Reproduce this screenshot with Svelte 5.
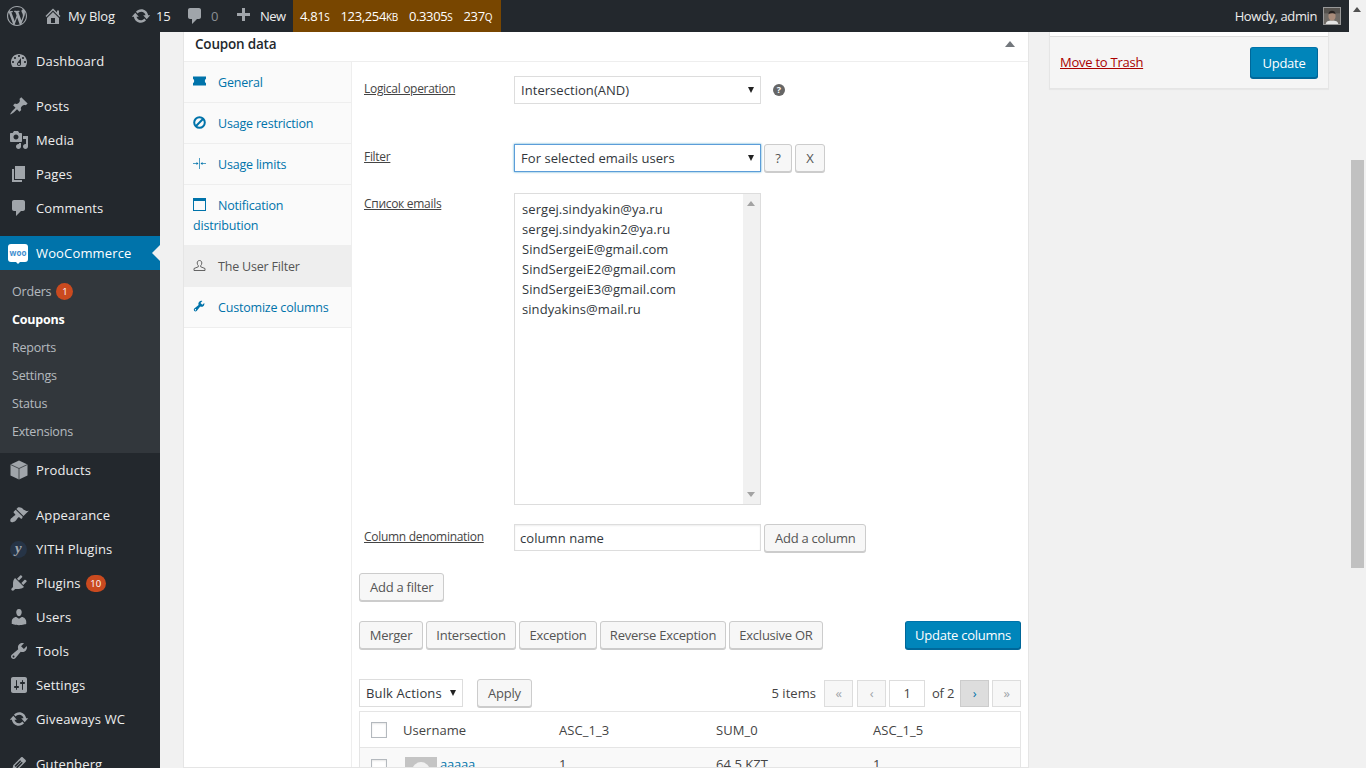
<script>
  const icons = {
    dashboard: "M3.76 16h12.48c1.1-1.37 1.76-3.11 1.76-5 0-4.42-3.58-8-8-8s-8 3.58-8 8c0 1.89.66 3.63 1.76 5zM10 4c.55 0 1 .45 1 1s-.45 1-1 1-1-.45-1-1 .45-1 1-1zM6 6c.55 0 1 .45 1 1s-.45 1-1 1-1-.45-1-1 .45-1 1-1zm8 0c.55 0 1 .45 1 1s-.45 1-1 1-1-.45-1-1 .45-1 1-1zm-5.37 5.55L12 7v6c0 1.1-.9 2-2 2s-2-.9-2-2c0-.57.24-1.08.63-1.45zM4 10c.55 0 1 .45 1 1s-.45 1-1 1-1-.45-1-1 .45-1 1-1zm12 0c.55 0 1 .45 1 1s-.45 1-1 1-1-.45-1-1 .45-1 1-1zm-5 3c0-.55-.45-1-1-1s-1 .45-1 1 .45 1 1 1 1-.45 1-1z",
    pin: "M10.44 3.02l1.82-1.82 6.36 6.35-1.83 1.82c-1.05-.68-2.48-.57-3.41.36l-.75.75c-.92.93-1.04 2.35-.35 3.41l-1.83 1.82-2.41-2.41-2.8 2.79c-.42.42-3.38 2.71-3.8 2.29s1.86-3.39 2.28-3.81l2.79-2.79L4.1 9.36l1.83-1.82c1.05.69 2.48.57 3.4-.36l.75-.75c.93-.92 1.05-2.35.36-3.41z",
    media: "M13 11V4c0-.55-.45-1-1-1h-1.67L9 1H5L3.67 3H2c-.55 0-1 .45-1 1v7c0 .55.45 1 1 1h10c.55 0 1-.45 1-1zM7 4.5c1.38 0 2.5 1.12 2.5 2.5S8.38 9.5 7 9.5 4.5 8.38 4.5 7 5.62 4.5 7 4.5zM14 6h5v10.5c0 1.38-1.12 2.5-2.5 2.5S14 17.88 14 16.5s1.12-2.5 2.5-2.5c.17 0 .34.02.5.05V9h-3V6zm-4 8.05V13h2v3.5c0 1.38-1.12 2.5-2.5 2.5S7 17.88 7 16.5 8.12 14 9.5 14c.17 0 .34.02.5.05z",
    page: "M6 15V2h10v13H6zm-1 1h8v2H3V5h2v11z",
    comment: "M5 2h9c1.1 0 2 .9 2 2v7c0 1.1-.9 2-2 2h-2l-5 5v-5H5c-1.1 0-2-.9-2-2V4c0-1.1.9-2 2-2z",
    brush: "M14.48 11.06L7.41 3.99l1.5-1.5c.5-.56 2.3-.47 3.51.32 1.21.8 1.43 1.28 2.91 2.1 1.18.64 2.45 1.26 4.45.85zm-.71.71L6.7 4.7 4.93 6.47c-.39.39-.39 1.02 0 1.41l1.06 1.06c.39.39.39 1.03 0 1.42-.6.6-1.43 1.11-2.21 1.69-.35.26-.7.53-1.01.84C1.43 13.23.79 16 1.65 16.85c.86.86 3.63.22 4.98-1.12.31-.31.58-.66.84-1.01.58-.78 1.09-1.61 1.69-2.21.39-.39 1.03-.39 1.42 0l1.06 1.06c.39.39 1.02.39 1.41 0z",
    plug: "M13.11 4.36L9.87 7.6 8 5.73l3.24-3.24c.35-.34 1.05-.2 1.56.32.52.51.66 1.21.31 1.55zm-8 1.77l.91-1.12 9.01 9.01-1.19.84c-.71.71-2.63 1.16-3.82 1.16H6.14L4.9 17.26c-.59.59-1.54.59-2.12 0-.59-.58-.59-1.53 0-2.12l1.24-1.24v-3.88c0-1.13.4-3.19 1.09-3.89zm7.26 3.97l3.24-3.24c.34-.35 1.04-.21 1.55.31.52.51.66 1.21.31 1.55l-3.24 3.25z",
    users: "M10 9.25c-2.27 0-2.73-3.44-2.73-3.44C7 4.02 7.82 2 9.97 2c2.16 0 2.98 2.02 2.71 3.81 0 0-.41 3.44-2.68 3.44zm0 2.57L12.72 10c2.39 0 4.52 2.33 4.52 4.53v2.49s-3.65 1.13-7.24 1.13c-3.65 0-7.24-1.13-7.24-1.13v-2.49c0-2.25 1.94-4.48 4.47-4.48z",
    tools: "M16.68 9.77c-1.34 1.34-3.3 1.67-4.95.99l-5.41 6.52c-.99.99-2.59.99-3.58 0s-.99-2.59 0-3.57l6.52-5.42c-.68-1.65-.35-3.61.99-4.95 1.28-1.28 3.12-1.62 4.72-1.06l-2.89 2.89 2.82 2.82 2.86-2.87c.53 1.58.18 3.39-1.08 4.65zM3.81 16.21c.4.39 1.04.39 1.43 0 .4-.4.4-1.04 0-1.43-.39-.4-1.03-.4-1.43 0-.39.39-.39 1.03 0 1.43z",
    sliders: "M18 16V4c0-1.1-.9-2-2-2H4c-1.1 0-2 .9-2 2v12c0 1.1.9 2 2 2h12c1.1 0 2-.9 2-2zM8 11h1c.55 0 1 .45 1 1s-.45 1-1 1H8v1.5c0 .28-.22.5-.5.5s-.5-.22-.5-.5V13H6c-.55 0-1-.45-1-1s.45-1 1-1h1V5.5c0-.28.22-.5.5-.5s.5.22.5.5V11zm5-2h-1c-.55 0-1-.45-1-1s.45-1 1-1h1V5.5c0-.28.22-.5.5-.5s.5.22.5.5V7h1c.55 0 1 .45 1 1s-.45 1-1 1h-1v5.5c0 .28-.22.5-.5.5s-.5-.22-.5-.5V9z",
    update: "M10.2 3.28c3.53 0 6.43 2.61 6.92 6h2.08l-3.5 4-3.5-4h2.32c-.45-1.97-2.21-3.45-4.32-3.45-1.45 0-2.73.71-3.54 1.78L4.95 5.66C6.23 4.2 8.11 3.28 10.2 3.28zm-.4 13.44c-3.52 0-6.43-2.61-6.92-6H.8l3.5-4c1.17 1.33 2.33 2.67 3.5 4H5.48c.45 1.97 2.21 3.45 4.32 3.45 1.45 0 2.73-.71 3.54-1.78l1.71 1.95c-1.28 1.46-3.15 2.38-5.25 2.38z",
    home: "M16 8.5l1.53 1.53-1.06 1.06L10 4.62l-6.47 6.47-1.06-1.06L10 2.5l4 4v-2h2v4zm-6-2.46l6 5.99V18H4v-5.97zM12 17v-5H8v5h4z",
    plus: "M17 7v3h-5v5H9v-5H4V7h5V2h3v5h5z",
    wp: "M20 10c0-5.51-4.49-10-10-10C4.48 0 0 4.49 0 10c0 5.52 4.48 10 10 10 5.51 0 10-4.48 10-10zM7.78 15.37L4.37 6.22c.55-.02 1.17-.08 1.17-.08.5-.06.44-1.13-.06-1.11 0 0-1.45.11-2.37.11-.18 0-.37 0-.58-.01C4.12 2.69 6.87 1.11 10 1.11c2.33 0 4.45.87 6.05 2.34-.68-.11-1.65.39-1.65 1.58 0 .74.45 1.36.9 2.1.35.61.55 1.36.55 2.46 0 1.49-1.4 5-1.4 5l-3.03-8.37c.54-.02.82-.17.82-.17.5-.05.44-1.25-.06-1.22 0 0-1.44.12-2.38.12-.87 0-2.33-.12-2.33-.12-.5-.03-.56 1.2-.06 1.22l.92.08 1.26 3.41zM17.41 10c.24-.64.74-1.87.43-4.25.7 1.29 1.05 2.71 1.05 4.25 0 3.29-1.73 6.24-4.4 7.78.97-2.59 1.94-5.2 2.92-7.78zM6.1 18.09C3.12 16.65 1.11 13.53 1.11 10c0-1.3.23-2.48.72-3.59C3.25 10.3 4.67 14.2 6.1 18.09zm4.03-6.63l2.58 6.98c-.86.29-1.76.45-2.71.45-.79 0-1.57-.11-2.29-.33.81-2.38 1.62-4.74 2.42-7.1z",
    pencil: "M13.89 3.39l2.71 2.72c.46.46.42 1.24.03 1.64l-8.01 8.02-5.56 1.16 1.16-5.58s7.6-7.63 7.99-8.03c.39-.39 1.22-.39 1.68.07zm-2.73 2.79l-5.59 5.61 1.11 1.11 5.54-5.65zm-2.97 8.23l5.58-5.6-1.07-1.08-5.59 5.6z"
  };
  const top1 = [{ i: 'pin', t: 'Posts' }, { i: 'media', t: 'Media' }, { i: 'page', t: 'Pages' }, { i: 'comment', t: 'Comments' }];
  const subs = ['Coupons', 'Reports', 'Settings', 'Status', 'Extensions'];
  const top2 = [{ i: 'plug', t: 'Plugins', b: '10' }, { i: 'users', t: 'Users' }, { i: 'tools', t: 'Tools' }, { i: 'sliders', t: 'Settings' }, { i: 'update', t: 'Giveaways WC' }];
  const emails = ['sergej.sindyakin@ya.ru', 'sergej.sindyakin2@ya.ru', 'SindSergeiE@gmail.com', 'SindSergeiE2@gmail.com', 'SindSergeiE3@gmail.com', 'sindyakins@mail.ru'];
  const ops = ['Merger', 'Intersection', 'Exception', 'Reverse Exception', 'Exclusive OR'];
</script>

{#snippet icon(name, cls = '')}
  <svg class="ic {cls}" viewBox="0 0 20 20" aria-hidden="true"><path d={icons[name]} fill-rule="evenodd" /></svg>
{/snippet}

<div class="screen">
  <div class="left">
    <header class="adminbar">
      <div class="ab-group">
        <span class="ab-item wp">{@render icon('wp')}</span>
        <span class="ab-item home">{@render icon('home')}<span>My Blog</span></span>
        <span class="ab-item upd">{@render icon('update')}<span>15</span></span>
        <span class="ab-item cmt">{@render icon('comment')}<span class="dim">0</span></span>
        <span class="ab-item new">{@render icon('plus')}<span>New</span></span>
        <span class="qm"><span>4.81<small>S</small></span><span>123,254<small>KB</small></span><span>0.3305<small>S</small></span><span>237<small>Q</small></span></span>
      </div>
      <div class="howdy">
        <span>Howdy, admin</span>
        <svg class="avatar" viewBox="0 0 18 18" aria-hidden="true">
          <rect width="18" height="18" fill="#6f6b66" />
          <rect x="0" y="0" width="18" height="6" fill="#55524e" />
          <path d="M2 18c0-3 3-4 7-4s7 1 7 4z" fill="#e4e4e4" />
          <ellipse cx="9" cy="9" rx="4" ry="5" fill="#a98c7a" />
          <path d="M5 7c0-3 2-4 4-4s4 1 4 4c-2-1.500-6-1.500-8 0z" fill="#262220" />
        </svg>
      </div>
    </header>

    <div class="body">
      <nav class="menu">
        <a class="mi">{@render icon('dashboard')}<span>Dashboard</span></a>
        <div class="sep"></div>
        {#each top1 as m}
          <a class="mi">{@render icon(m.i)}<span>{m.t}</span></a>
        {/each}
        <div class="sep"></div>
        <a class="mi current">
          <span class="woo"><span>woo</span></span><span>WooCommerce</span>
        </a>
        <div class="sub">
          <a class="si">Orders <b class="badge one">1</b></a>
          {#each subs as s, idx}
            <a class="si" class:on={idx === 0}>{s}</a>
          {/each}
        </div>
        <a class="mi">
          <svg class="ic" viewBox="0 0 20 20" aria-hidden="true"><path d="M10 0.500l8.500 4v11l-8.500 4-8.500-4v-11z" /><path d="M1.500 4.500l8.500 4 8.500-4M10 8.500v11" fill="none" stroke="#23282d" stroke-width=".7" /></svg>
          <span>Products</span>
        </a>
        <div class="sep"></div>
        <a class="mi">{@render icon('brush')}<span>Appearance</span></a>
        <a class="mi"><span class="yith">y</span><span>YITH Plugins</span></a>
        {#each top2 as m}
          <a class="mi">{@render icon(m.i)}<span>{m.t}</span>{#if m.b}<b class="badge">{m.b}</b>{/if}</a>
        {/each}
        <div class="sep"></div>
        <a class="mi">{@render icon('pencil')}<span>Gutenberg</span></a>
      </nav>

      <main class="content">
        <section class="card">
          <div class="card-h"><h2>Coupon data</h2><span class="up"></span></div>
          <div class="card-b">
            <ul class="tabs">
              <li>
                <svg class="ti" viewBox="0 0 14 14" aria-hidden="true"><path d="M0 1.500h13v2.200a2.800 2.800 0 0 0 0 4.600v2.200H0V8.300a2.800 2.800 0 0 0 0-4.600z" /></svg>
                General
              </li>
              <li>
                <svg class="ti" viewBox="0 0 14 14" aria-hidden="true"><circle cx="6.500" cy="6.500" r="5.300" fill="none" stroke="currentColor" stroke-width="2" /><path d="M2.800 10.200l7.400-7.400" stroke="currentColor" stroke-width="2" /></svg>
                Usage restriction
              </li>
              <li>
                <svg class="ti" viewBox="0 0 14 14" aria-hidden="true"><path d="M6.500 1v11M0 6.500h4M9 6.500h4" fill="none" stroke="currentColor" stroke-width=".7" /><path d="M5.500 6.500l-2-1.500v3zM7.500 6.500l2-1.500v3z" /></svg>
                Usage limits
              </li>
              <li>
                <svg class="ti" viewBox="0 0 14 14" aria-hidden="true"><rect x=".5" y=".5" width="12" height="12" fill="none" stroke="currentColor" /><rect x="0" y="0" width="13" height="3" /></svg>
                Notification distribution
              </li>
              <li class="active">
                <svg class="ti" viewBox="0 0 14 14" aria-hidden="true"><path d="M6.500 1.500c1.500 0 2.300 1.100 2.300 2.500 0 1.100-.5 2.100-1.100 2.600v1.200l4.300 1.700v2H1v-2l4.300-1.700V6.600C4.700 6.100 4.200 5.100 4.200 4c0-1.400.8-2.500 2.300-2.500z" fill="none" stroke="currentColor" stroke-width=".9" /></svg>
                The User Filter
              </li>
              <li>
                <svg class="ti" viewBox="0 0 14 14" aria-hidden="true"><path d={icons.tools} transform="translate(-.5 -.5) scale(.66)" /></svg>
                Customize columns
              </li>
            </ul>

            <div class="panel">
              <div class="frow r1">
                <span class="lab">Logical operation</span>
                <span class="sel"><select><option>Intersection(AND)</option></select></span>
                <span class="help">?</span>
              </div>
              <div class="frow r2">
                <span class="lab">Filter</span>
                <span class="sel focus"><select><option>For selected emails users</option></select></span>
                <button class="btn q">?</button>
                <button class="btn x">X</button>
              </div>
              <div class="frow r3">
                <span class="lab">Список emails</span>
                <div class="area">
                  <div class="lines">
                    {#each emails as e}<div>{e}</div>{/each}
                  </div>
                  <div class="sb"><i class="au"></i><i class="ad"></i></div>
                </div>
              </div>
              <div class="frow r4">
                <span class="lab">Column denomination</span>
                <span class="field">column name</span>
                <button class="btn">Add a column</button>
              </div>
              <div class="addf"><button class="btn">Add a filter</button></div>
              <div class="ops">
                {#each ops as o}<button class="btn">{o}</button>{/each}
                <button class="btn primary right">Update columns</button>
              </div>
              <div class="nav">
                <span class="sel bulk"><select><option>Bulk Actions</option></select></span>
                <button class="btn apply">Apply</button>
                <div class="pages">
                  <span class="count">5 items</span>
                  <span class="pg">«</span>
                  <span class="pg">‹</span>
                  <span class="cur">1</span>
                  <span class="of">of 2</span>
                  <span class="pg act">›</span>
                  <span class="pg">»</span>
                </div>
              </div>
              <div class="tbl">
                <div class="tr th">
                  <span class="c0"><i class="cb"></i></span>
                  <span class="c1">Username</span>
                  <span class="c2">ASC_1_3</span>
                  <span class="c3">SUM_0</span>
                  <span class="c4">ASC_1_5</span>
                </div>
                <div class="tr td">
                  <span class="c0"><i class="cb"></i></span>
                  <span class="c1"><span class="av"><i></i></span><a>aaaaa</a></span>
                  <span class="c2">1</span>
                  <span class="c3">64.5 KZT</span>
                  <span class="c4">1</span>
                </div>
              </div>
            </div>
          </div>
        </section>

        <aside class="side">
          <div class="side-top"></div>
          <div class="side-act">
            <a class="trash">Move to Trash</a>
            <button class="btn primary upd-b">Update</button>
          </div>
        </aside>
      </main>
    </div>
  </div>

  <div class="scroll">
    <i class="s-up"></i>
    <i class="thumb"></i>
  </div>
</div>

<style>
  :global(body) { margin: 0; background: #f1f1f1; }
  * { box-sizing: border-box; }
  .screen {
    width: 1366px; height: 768px; overflow: hidden; display: flex;
    font-family: "Open Sans", sans-serif; font-size: 13px; color: #444; letter-spacing: -0.2px;
  }
  .left { width: 1349px; display: flex; flex-direction: column; }
  .ic { width: 20px; height: 20px; fill: currentColor; display: block; flex: none; }

  .adminbar { height: 32px; background: #23282d; color: #eee; display: flex; justify-content: space-between; flex: none; }
  .ab-group { display: flex; align-items: stretch; }
  .ab-item { display: flex; align-items: center; gap: 5px; color: #eee; }
  .ab-item .ic { color: #a0a5aa; }
  .wp { padding-left: 7px; width: 43px; }
  .home { width: 88px; gap: 5px; }
  .upd { width: 54px; gap: 5px; }
  .cmt { width: 48px; gap: 6px; }
  .dim { color: #8a8f94; }
  .new { width: 60px; gap: 7px; letter-spacing: -.6px; }
  .qm { background: #784600; color: #fff; display: flex; align-items: center; gap: 11px; padding: 0 8px 0 7px; width: 208px; letter-spacing: -.35px; }
  .qm small { font-size: 10px; }
  .howdy { display: flex; align-items: center; gap: 6px; padding-right: 8px; letter-spacing: -.4px; }
  .avatar { width: 18px; height: 18px; border: 1px solid #999; }

  .body { flex: 1; display: flex; min-height: 0; }
  .menu { width: 160px; background: #23282d; flex: none; padding-top: 12px; display: flex; flex-direction: column; }
  .mi { height: 34px; flex: none; display: flex; align-items: center; gap: 7px; padding-left: 9px; color: #eee; position: relative; letter-spacing: .15px; }
  .mi .ic { color: #a0a5aa; }
  .sep { height: 11px; flex: none; }
  .current { background: #0073aa; color: #fff; }
  .current::after {
    content: ""; position: absolute; right: 0; top: 9px;
    border: 8px solid transparent; border-right-color: #f1f1f1; border-left-width: 0;
  }
  .woo { width: 20px; height: 18px; background: #fff; border-radius: 3px; display: flex; align-items: center; justify-content: center; margin: -1px 1px 0 -1px; position: relative; }
  .woo::after { content: ""; position: absolute; left: 8px; bottom: -2px; border: 2px solid transparent; border-top-color: #fff; border-bottom: 0; }
  .woo span { font-size: 8px; font-weight: 700; color: #3f8fd0; letter-spacing: 0; line-height: 1; }
  .yith { width: 17px; height: 17px; margin: 0 2px 0 1px; border-radius: 50%; background: #263446; color: #a0a5aa; font: italic 700 15px/15px "Liberation Serif", serif; text-align: center; flex: none; }
  .sub { background: #32373c; padding: 7px 0 8px; height: 183px; flex: none; font-size: 12.500px; }
  .si { display: flex; align-items: center; gap: 5px; height: 28px; padding-left: 12px; color: rgba(240,245,250,.7); }
  .si.on { color: #fff; font-weight: 700; }
  .badge { background: #ca4a1f; color: #fff; font-weight: 400; font-size: 9.500px; border-radius: 9px; min-width: 17px; height: 17px; padding: 0 5px; display: inline-flex; align-items: center; justify-content: center; letter-spacing: 0; }
  .mi .badge { margin-left: -2px; padding: 0 4px; min-width: 20px; }

  .content { flex: 1; display: flex; align-items: flex-start; padding-left: 23px; gap: 20px; min-width: 0; height: 736px; overflow: hidden; }
  .card { width: 846px; height: 736px; flex: none; background: #fff; border: 1px solid #e5e5e5; border-top: 0; overflow: hidden; }
  .card-h { height: 30px; display: flex; align-items: center; justify-content: space-between; padding: 0 13px 6px 11px; border-bottom: 1px solid #eee; }
  h2 { margin: 0; font-size: 13.500px; font-weight: 600; color: #23282d; }
  .up { border: 5px solid transparent; border-bottom: 6px solid #72777c; border-top: 0; }
  .card-b { display: flex; }
  .tabs { list-style: none; margin: 0; padding: 0; width: 168px; flex: none; background: #fff; border-right: 1px solid #eee; height: 706px; font-size: 12.500px; }
  .tabs li { color: #0073aa; padding: 11px 9px 9px; line-height: 20px; border-bottom: 1px solid #eee; background: #fafafa; }
  .tabs li.active { background: #eee; color: #555; }
  .ti { width: 14px; height: 14px; fill: currentColor; vertical-align: -2px; margin-right: 8px; display: inline-block; }

  .panel { flex: 1; min-width: 0; padding: 14px 7px 0 7px; }
  .frow { display: flex; align-items: flex-start; position: relative; padding-left: 5px; }
  .lab { width: 150px; flex: none; font-size: 12px; text-decoration: underline; color: #444; line-height: 16px; margin-top: 5px; letter-spacing: -.3px; }
  .r1 { height: 68px; }
  .r1 select { letter-spacing: .2px; }
  .r2 { height: 49px; }
  .r3 { height: 331px; }
  .r3 .lab { margin-top: 3px; }
  .r4 { height: 49px; }
  .lab + * { margin-right: 3px; }
  .sel { position: relative; display: block; width: 247px; height: 28px; }
  .sel select {
    appearance: none; width: 100%; height: 100%; border: 1px solid #ddd; background: #fff; padding: 0 6px;
    font: inherit; font-size: 13px; color: #32373c; border-radius: 0; letter-spacing: .05px; display: block;
  }
  .sel::after { content: ""; position: absolute; right: 7px; top: 11px; border: 3px solid transparent; border-top: 6px solid #222; border-bottom: 0; pointer-events: none; }
  .focus select { border-color: #5b9dd9; box-shadow: 0 0 2px rgba(30,140,190,.8); }
  .help { width: 12px; height: 12px; margin: 8px 0 0 9px; border-radius: 50%; background: #666; color: #fff; font-size: 9px; font-weight: 700; line-height: 12px; text-align: center; letter-spacing: 0; }

  .btn {
    font: inherit; letter-spacing: -.25px; height: 28px; padding: 0 10px; background: #f7f7f7; border: 1px solid #ccc; border-radius: 3px;
    box-shadow: 0 1px 0 #ccc; color: #555; font-size: 13px; line-height: 26px; white-space: nowrap;
  }
  .btn.q { width: 28px; padding: 0; margin-right: 3px; }
  .btn.x { width: 30px; padding: 0; }
  .primary { background: #0085ba; border-color: #0073aa #006799 #006799; box-shadow: 0 1px 0 #006799; color: #fff; }

  .area { width: 247px; height: 312px; border: 1px solid #ddd; display: flex; }
  .lines { flex: 1; padding: 5px 7px; line-height: 20px; color: #32373c; letter-spacing: .07px; }
  .sb { width: 17px; background: #f1f1f1; position: relative; }
  .au, .ad { position: absolute; left: 4px; border: 4px solid transparent; }
  .au { top: 7px; border-bottom: 5px solid #a3a3a3; border-top: 0; }
  .ad { bottom: 7px; border-top: 5px solid #a3a3a3; border-bottom: 0; }
  .field { width: 247px; height: 27px; border: 1px solid #ddd; padding: 0 5px; line-height: 26px; color: #32373c; box-shadow: inset 0 1px 2px rgba(0,0,0,.07); letter-spacing: .07px; }

  .addf { height: 48px; }
  .ops { display: grid; grid-template-columns: 64px 90px 78px 126px 94px 1fr 116px; column-gap: 3px; height: 58px; align-items: start; }
  .ops .btn { padding: 0; }
  .ops .right { grid-column: 7; }
  .nav { display: flex; align-items: flex-start; height: 32px; }
  .bulk { width: 104px; height: 28px; }
  .bulk select { letter-spacing: .13px; }
  .bulk::after { top: 11px; }
  .apply { margin-left: 14px; }
  .pages { margin-left: auto; display: flex; align-items: center; height: 28px; }
  .count { margin-right: 8px; letter-spacing: .05px; }
  .pg { width: 29px; height: 27px; border: 1px solid #ddd; background: #f7f7f7; color: #a0a5aa; display: flex; align-items: center; justify-content: center; margin-right: 4px; }
  .pg.act { background: #ddd; border-color: #ccc; color: #0073aa; margin-right: 3px; }
  .pg:last-child { margin-right: 0; }
  .cur { width: 36px; height: 27px; border: 1px solid #ddd; text-align: center; line-height: 25px; background: #fff; margin-right: 7px; margin-left: -1px; }
  .of { width: 28px; }
  .tbl { border: 1px solid #e5e5e5; letter-spacing: .05px; }
  .tr { display: flex; align-items: center; }
  .th { height: 36px; border-bottom: 1px solid #e5e5e5; }
  .td { height: 40px; background: #f9f9f9; align-items: flex-start; padding-top: 7px; }
  .td .c0 { padding-top: 4px; }
  .c0 { width: 43px; padding-left: 11px; flex: none; }
  .c1 { width: 156px; flex: none; display: flex; gap: 3px; }
  .c2, .c3, .c4 { width: 157px; flex: none; }
  .cb { display: block; width: 16px; height: 16px; border: 1px solid #b4b9be; background: #fff; box-shadow: inset 0 1px 2px rgba(0,0,0,.1); }
  .av { width: 32px; height: 32px; background: #c4c4c4; margin: 2px 0 0 2px; display: block; position: relative; overflow: hidden; flex: none; }
  .av i { position: absolute; left: 7px; top: 5px; width: 18px; height: 18px; border-radius: 50%; background: #f1f1f1; }
  .c1 a { color: #0073aa; letter-spacing: -.2px; }

  .side { width: 280px; flex: none; background: #fff; border: 1px solid #e5e5e5; border-top: 0; box-shadow: 0 1px 1px rgba(0,0,0,.04); }
  .side-top { height: 5px; border-bottom: 1px solid #ddd; }
  .side-act { height: 51px; background: #f5f5f5; display: flex; align-items: center; justify-content: space-between; padding: 0 10px; }
  .trash { color: #a00; text-decoration: underline; margin-top: -2px; letter-spacing: -.25px; }
  .upd-b { height: 31px; width: 68px; padding: 0; font-size: 13px; }

  .scroll { width: 17px; background: #f1f1f1; position: relative; flex: none; }
  .s-up { position: absolute; top: 7px; left: 4px; border: 4px solid transparent; border-bottom: 5px solid #505050; border-top: 0; }
  .thumb { position: absolute; top: 160px; left: 2px; width: 13px; height: 408px; background: #c1c1c1; }
</style>
